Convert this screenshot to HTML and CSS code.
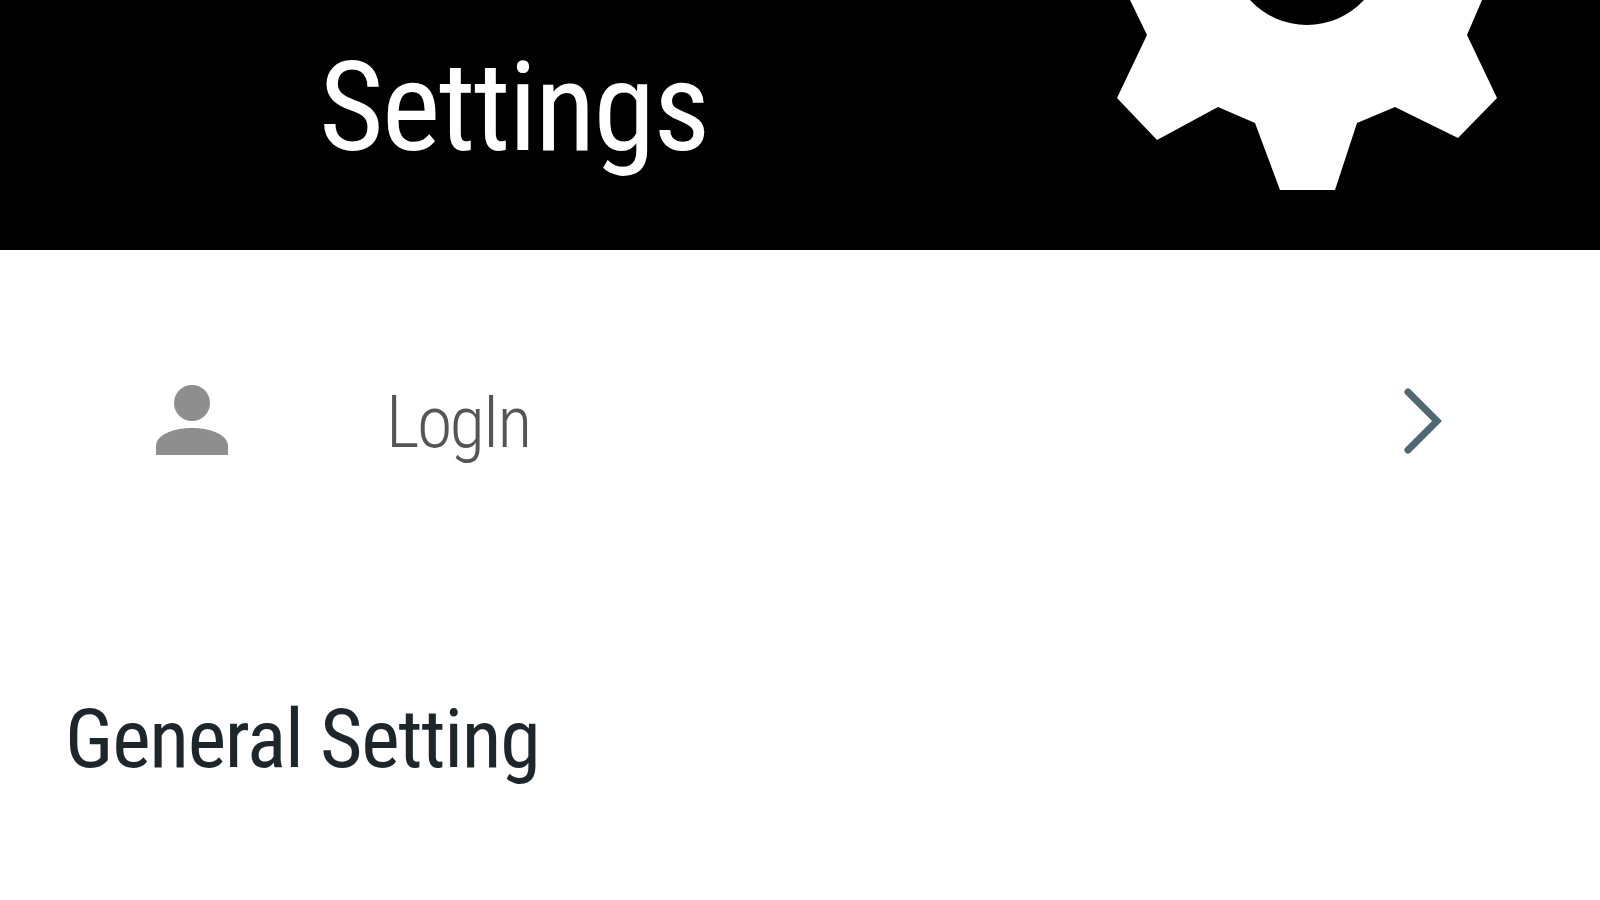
FILE: index.html
```html
<!DOCTYPE html>
<html lang="en">
<head>
	<meta charset="UTF-8">
	<title>Settings</title>
	<link rel="stylesheet" href="styles.css">
</head>
<body>
	<header class="top">
		<h1 class="title">Settings</h1>
		<svg class="gear" viewBox="1115 0 385 192" width="385" height="192">
			<path fill="#fff" fill-rule="evenodd" d="M1130 0L1147 35L1117 98L1157 140L1218 107L1255 123L1280 190L1335 190L1357 123L1395 107L1458 138L1497 98L1467 35L1482 0L1364 0A77.5 77.5 0 0 1 1250 0Z"/>
		</svg>
	</header>
	<div class="row">
		<svg class="person" viewBox="0 0 72 74" width="72" height="74">
			<circle cx="36" cy="19" r="18" fill="#8e8e8e"/>
			<path fill="#8e8e8e" d="M0 71V62C0 51 17 44 36 44S72 51 72 62V71Z"/>
		</svg>
		<span class="label">LogIn</span>
		<svg class="chevron" viewBox="0 0 40 66" width="40" height="66">
			<path fill="none" stroke="#4f6872" stroke-width="7" stroke-linecap="round" d="M4 4L33 33L4 62"/>
		</svg>
	</div>
	<h2 class="section">General Setting</h2>
</body>
</html>
```

FILE: styles.css
```css
html, body {
	margin: 0;
	padding: 0;
	background: #fff;
	font-family: Roboto, "Liberation Sans", sans-serif;
	font-stretch: 75%;
}
.top {
	display: flex;
	justify-content: space-between;
	height: 250px;
	padding: 0 100px 0 319px;
	background: #000;
}
.title {
	margin: 0;
	padding-top: 36px;
	color: #fff;
	font-size: 125px;
	font-weight: 450;
	letter-spacing: -2px;
	line-height: 144px;
}
.gear {
	display: block;
}
.row {
	display: flex;
	align-items: center;
	margin-top: 133px;
	padding: 0 156px;
}
.person {
	display: block;
	margin-bottom: 4px;
}
.label {
	flex: 1;
	margin-left: 158px;
	color: #555;
	font-size: 72px;
	font-weight: 320;
	letter-spacing: -2.5px;
	line-height: 80px;
}
.chevron {
	display: block;
	margin-bottom: 5px;
}
.section {
	margin: 0;
	padding: 229px 0 0 65px;
	color: #1c262b;
	font-size: 82px;
	font-weight: 400;
	letter-spacing: -1.3px;
	line-height: 94px;
}
```
